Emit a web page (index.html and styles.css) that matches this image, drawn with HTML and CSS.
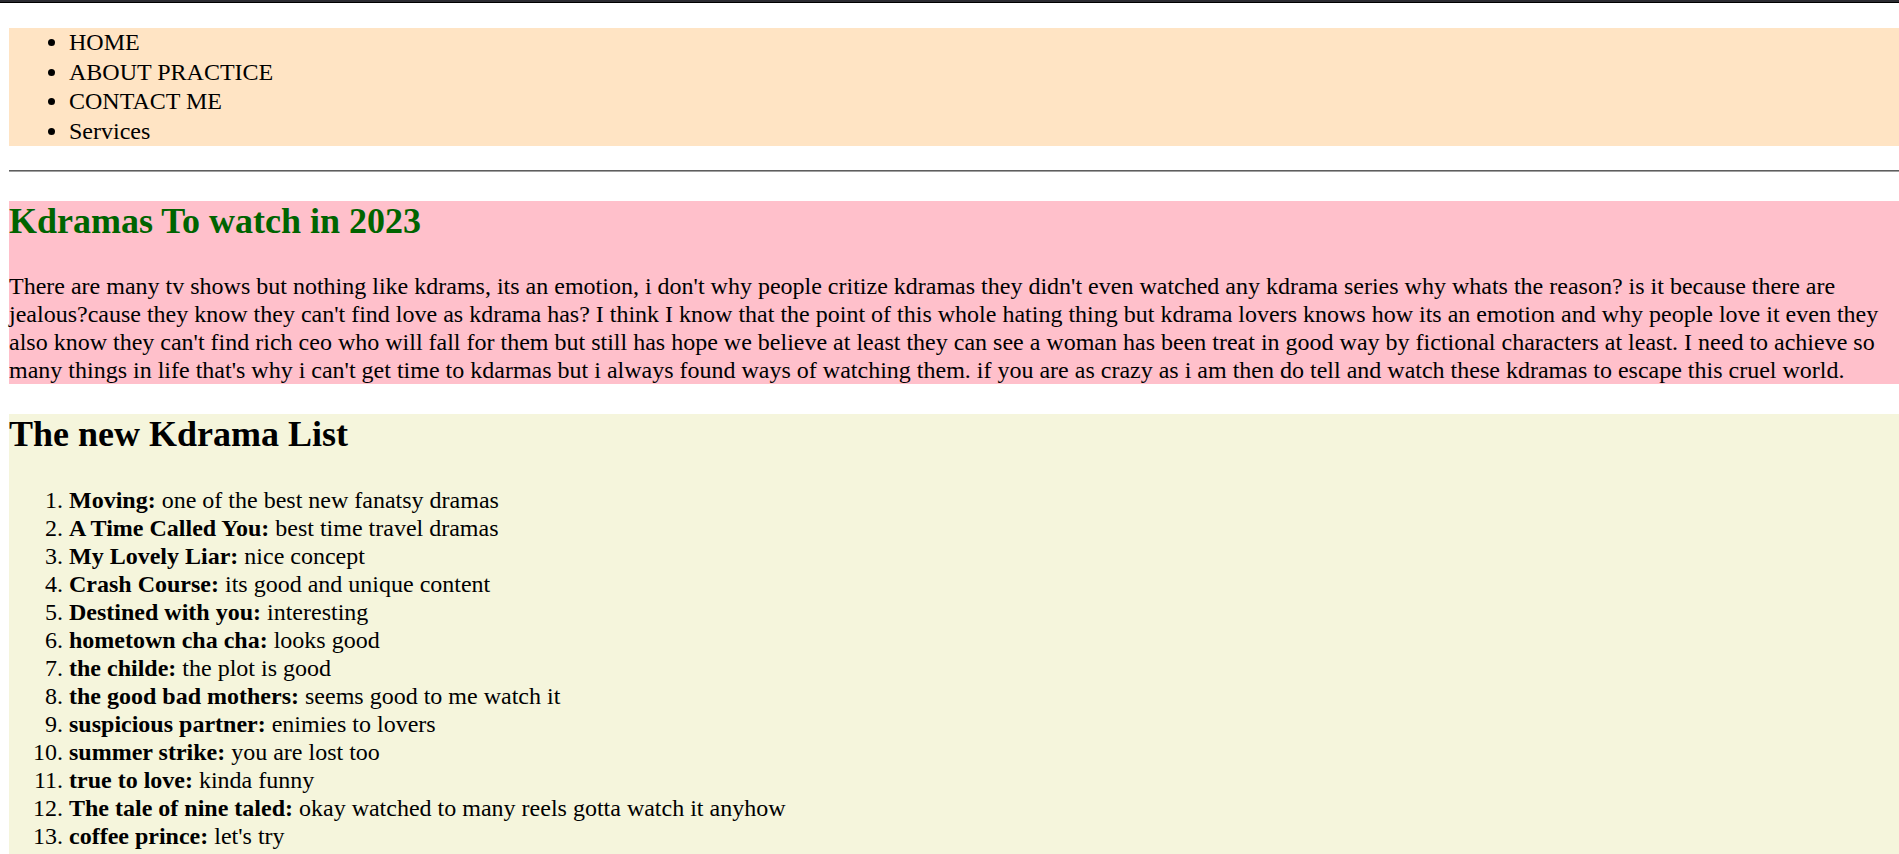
FILE: index.html
```html
<!DOCTYPE html>
<html lang="en">
<head>
<meta charset="utf-8">
<title>Kdramas</title>
<link rel="stylesheet" href="styles.css">
</head>
<body>
<div class="topbar"></div>
<div class="page">
  <nav class="nav">
    <ul class="nav-list">
      <li>HOME</li>
      <li>ABOUT PRACTICE</li>
      <li>CONTACT ME</li>
      <li>Services</li>
    </ul>
  </nav>
  <hr class="rule">
  <section class="intro">
    <h2 class="intro-title">Kdramas To watch in 2023</h2>
    <p class="intro-text">There are many tv shows but nothing like kdrams, its an emotion, i don't why people critize kdramas they didn't even watched any kdrama series why whats the reason? is it because there are jealous?cause they know they can't find love as kdrama has? I think I know that the point of this whole hating thing but kdrama lovers knows how its an emotion and why people love it even they also know they can't find rich ceo who will fall for them but still has hope we believe at least they can see a woman has been treat in good way by fictional characters at least. I need to achieve so many things in life that's why i can't get time to kdarmas but i always found ways of watching them. if you are as crazy as i am then do tell and watch these kdramas to escape this cruel world.</p>
  </section>
  <section class="list">
    <h2 class="list-title">The new Kdrama List</h2>
    <ol class="drama-list">
      <li><b>Moving:</b> one of the best new fanatsy dramas</li>
      <li><b>A Time Called You:</b> best time travel dramas</li>
      <li><b>My Lovely Liar:</b> nice concept</li>
      <li><b>Crash Course:</b> its good and unique content</li>
      <li><b>Destined with you:</b> interesting</li>
      <li><b>hometown cha cha:</b> looks good</li>
      <li><b>the childe:</b> the plot is good</li>
      <li><b>the good bad mothers:</b> seems good to me watch it</li>
      <li><b>suspicious partner:</b> enimies to lovers</li>
      <li><b>summer strike:</b> you are lost too</li>
      <li><b>true to love:</b> kinda funny</li>
      <li><b>The tale of nine taled:</b> okay watched to many reels gotta watch it anyhow</li>
      <li><b>coffee prince:</b> let's try</li>
    </ol>
  </section>
</div>
</body>
</html>
```
FILE: styles.css
```css
html, body {
  margin: 0;
  padding: 0;
  background: #ffffff;
}

body {
  font-family: "Liberation Serif", "Times New Roman", serif;
  font-size: 24px;
  color: #000000;
  overflow: hidden;
}

.topbar {
  height: 2px;
  background: #2b2c31;
  border-bottom: 1px solid #000000;
}

.page {
  padding: 25px 0 0 9px;
}

.nav {
  background: #ffe4c4;
}

.nav-list {
  margin: 0;
  padding-left: 60px;
  line-height: 29.5px;
}

.rule {
  margin: 24px 0 0;
  height: 0;
  border: none;
  border-top: 1px solid #5e5e5e;
  border-bottom: 1px solid #a0a0a0;
}

.intro {
  background: #ffc0cb;
}

.intro-title,
.list-title {
  font-size: 36px;
  font-weight: bold;
  line-height: 41.4px;
}

.intro-title {
  color: #006400;
  margin: 29px 0 30px;
}

.intro-text {
  margin: 0 0 24px;
  line-height: 28px;
}

.list {
  background: #f5f5dc;
  margin-top: 30px;
  padding-bottom: 24px;
}

.list-title {
  margin: 0 0 30px;
}

.drama-list {
  margin: 0;
  padding-left: 60px;
  line-height: 28px;
}
```
